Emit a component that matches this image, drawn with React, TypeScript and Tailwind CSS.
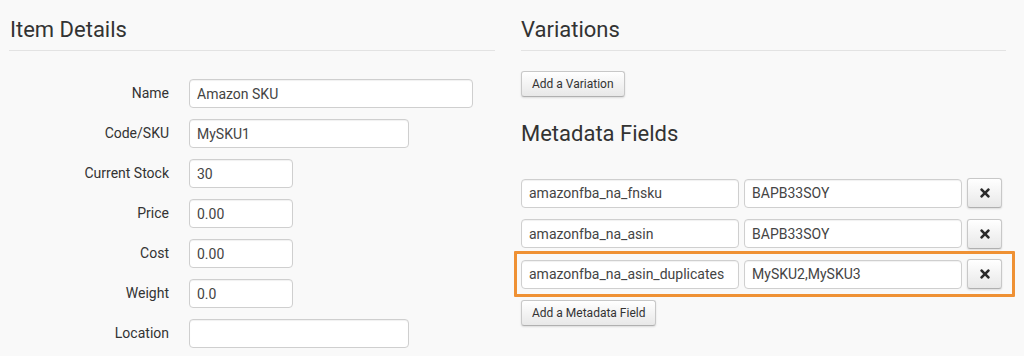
import React from "react";
import { FaTimes } from "react-icons/fa";

const inputCls =
  "block h-[29px] rounded-[4px] border border-[#cfcfcf] bg-white px-[7px] text-[14px] text-[#444] shadow-[inset_0_1px_1px_rgba(0,0,0,0.06)] outline-none";

const btnCls =
  "block h-[26px] whitespace-nowrap rounded-[3px] border border-[#c8c8c8] border-b-[#b0b0b0] bg-gradient-to-b from-white to-[#e8e8e8] px-[10px] text-[12px] leading-[24px] text-[#333] shadow-[0_1px_2px_rgba(0,0,0,0.12)]";

function Heading({ children }: { children: React.ReactNode }) {
  return <h2 className="text-[22px] leading-[24px] text-[#333] font-normal">{children}</h2>;
}

const fields: { label: string; value: string; w: string }[] = [
  { label: "Name", value: "Amazon SKU", w: "w-[284px]" },
  { label: "Code/SKU", value: "MySKU1", w: "w-[220px]" },
  { label: "Current Stock", value: "30", w: "w-[104px]" },
  { label: "Price", value: "0.00", w: "w-[104px]" },
  { label: "Cost", value: "0.00", w: "w-[104px]" },
  { label: "Weight", value: "0.0", w: "w-[104px]" },
  { label: "Location", value: "", w: "w-[220px]" },
];

const meta = [
  { k: "amazonfba_na_fnsku", v: "BAPB33SOY", hl: false },
  { k: "amazonfba_na_asin", v: "BAPB33SOY", hl: false },
  { k: "amazonfba_na_asin_duplicates", v: "MySKU2,MySKU3", hl: true },
];

export default function App() {
  return (
    <div
      className="w-[1024px] h-[356px] overflow-hidden bg-[#f9f9f9] flex gap-[26px] pl-[9px]"
      style={{ fontFamily: "Roboto, 'Liberation Sans', sans-serif" }}
    >
      {/* Left column */}
      <div className="w-[486px] pt-[18px]">
        <div className="pl-[1px]">
          <Heading>Item Details</Heading>
        </div>
        <div className="mt-[8px] border-t border-[#e3e3e3]" />
        <div className="mt-[28px] flex flex-col gap-[11px]">
          {fields.map((f) => (
            <div key={f.label} className="flex items-center gap-[20px]">
              <div className="w-[160px] text-right text-[14px] text-[#333]">{f.label}</div>
              <input className={`${inputCls} ${f.w}`} defaultValue={f.value} readOnly />
            </div>
          ))}
        </div>
      </div>

      {/* Right column */}
      <div className="w-[485px] pt-[18px]">
        <Heading>Variations</Heading>
        <div className="mt-[8px] border-t border-[#e3e3e3]" />
        <button className={`${btnCls} mt-[20px]`}>Add a Variation</button>
        <div className="mt-[25px]">
          <Heading>Metadata Fields</Heading>
        </div>
        <div className="mt-[32px] flex flex-col gap-[10.5px]">
          {meta.map((m) => (
            <div key={m.k} className="relative flex items-center gap-[5px] w-[481px]">
              <input className={`${inputCls} w-[219px] text-[13.5px]`} defaultValue={m.k} readOnly />
              <input className={`${inputCls} w-[219px] text-[13.5px]`} defaultValue={m.v} readOnly />
              <button className="h-[30px] w-[35px] rounded-[3px] border border-[#c8c8c8] border-b-[#b0b0b0] bg-gradient-to-b from-white to-[#e8e8e8] shadow-[0_1px_2px_rgba(0,0,0,0.12)] flex items-center justify-center text-[#2a2a2a]">
                <FaTimes size={14} />
              </button>
              {m.hl && (
                <div className="pointer-events-none absolute -left-[7px] -right-[13px] -top-[8px] -bottom-[8px] border-[3px] border-[#ef9134] rounded-[1px]" />
              )}
            </div>
          ))}
        </div>
        <button className={`${btnCls} mt-[11px]`}>Add a Metadata Field</button>
      </div>
    </div>
  );
}
